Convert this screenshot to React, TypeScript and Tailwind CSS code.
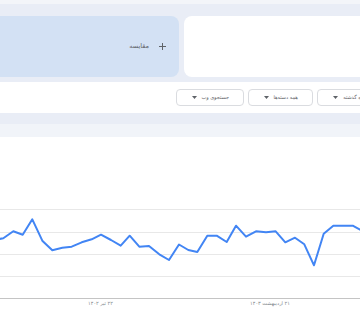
const points: [number, number][] = [
  [-6.5, 240],
  [3.3, 238.3],
  [13.3, 231.3],
  [22.7, 234.7],
  [32.3, 219.3],
  [42.3, 240.7],
  [52.3, 250.3],
  [62.3, 247.7],
  [71.7, 246.7],
  [81.7, 242.3],
  [91.7, 239.3],
  [101, 234.7],
  [111, 240],
  [120.7, 245.7],
  [129.7, 235.7],
  [139.3, 246.7],
  [149, 246],
  [159.3, 254.3],
  [169, 260],
  [179, 244.5],
  [188.3, 250],
  [197.3, 252],
  [207.3, 235.7],
  [216.7, 235.7],
  [226.7, 242],
  [236, 225.7],
  [246, 236.7],
  [256, 231.3],
  [266, 232.3],
  [275.7, 231.3],
  [285.3, 242.3],
  [295, 237.7],
  [304.3, 244.3],
  [314, 265.3],
  [323.7, 233.7],
  [333.3, 225.7],
  [343.3, 225.7],
  [352.7, 225.7],
  [362.3, 231],
];

// chart svg starts at y=137
const CHART_TOP = 137;

const Caret = () => (
  <svg width="5" height="3" viewBox="0 0 5 3" className="shrink-0">
    <path d="M0 0 L5 0 L2.5 3 Z" fill="#5f6368" />
  </svg>
);

const Chip = ({ label, width }: { label: string; width: string }) => (
  <div
    className={`${width} h-[17px] shrink-0 rounded-[4px] border border-[#dadce0] bg-white pr-[14px] pl-[15px] flex items-center justify-between`}
  >
    <span className="text-[5px] leading-none text-[#5f6368] whitespace-nowrap">
      {label}
    </span>
    <Caret />
  </div>
);

const Chart = () => {
  const grid = [209, 232, 254, 276];
  const d = points
    .map(([x, y], i) => `${i === 0 ? "M" : "L"}${x} ${y - CHART_TOP}`)
    .join(" ");

  return (
    <svg width="360" height="183" viewBox="0 0 360 183" className="block">
      {grid.map((y) => (
        <line
          key={y}
          x1="0"
          x2="360"
          y1={y - CHART_TOP + 0.5}
          y2={y - CHART_TOP + 0.5}
          stroke="#e8e8e8"
          strokeWidth="1"
        />
      ))}
      <line x1="0" x2="360" y1={161.5} y2={161.5} stroke="#c4c4c4" strokeWidth="1" />
      <path
        d={d}
        fill="none"
        stroke="#4285f4"
        strokeWidth="2"
        strokeLinejoin="round"
        strokeLinecap="round"
      />
      <text
        x="100.5"
        y="167.5"
        textAnchor="middle"
        direction="rtl"
        fontSize="5"
        fill="#80868b"
        fontFamily="DejaVu Sans, sans-serif"
      >
        ۲۲ تیر ۱۴۰۲
      </text>
      <text
        x="270"
        y="167.5"
        textAnchor="middle"
        direction="rtl"
        fontSize="5"
        fill="#80868b"
        fontFamily="DejaVu Sans, sans-serif"
      >
        ۲۱ اردیبهشت ۱۴۰۳
      </text>
    </svg>
  );
};

const App = () => {
  return (
    <div
      dir="rtl"
      className="w-[360px] h-[320px] overflow-hidden bg-white font-['DejaVu_Sans',sans-serif]"
    >
      <div className="h-[4px] bg-[#f3f5f9]" />

      {/* compare cards */}
      <div className="h-[78px] bg-[#e9edf6] pt-[12px] overflow-hidden">
        <div className="flex gap-[5px] mr-[-24px]">
          <div className="w-[200px] h-[61px] shrink-0 rounded-[8px] bg-white" />
          <div className="w-[200px] h-[61px] shrink-0 rounded-[8px] bg-[#d3e1f4] flex items-center pr-[13px] gap-[10px]">
            <svg width="7" height="7" viewBox="0 0 7 7" className="shrink-0">
              <path d="M3.5 0 V7 M0 3.5 H7" stroke="#5f6368" strokeWidth="1" />
            </svg>
            <span className="text-[6.5px] leading-none text-[#5f6368]">مقایسه</span>
          </div>
        </div>
      </div>

      {/* filters */}
      <div className="h-[31px] bg-white pt-[7px] overflow-hidden">
        <div className="flex gap-[4px] mr-[-27px]">
          <Chip label="۱۲ ماه گذشته" width="w-[70px]" />
          <Chip label="همه دسته‌ها" width="w-[65px]" />
          <Chip label="جستجوی وب" width="w-[68px]" />
        </div>
      </div>

      <div className="h-[11px] bg-[#e9edf6]" />
      <div className="h-[13px] bg-[#f1f4f9]" />

      <Chart />
    </div>
  );
};

export default App;
